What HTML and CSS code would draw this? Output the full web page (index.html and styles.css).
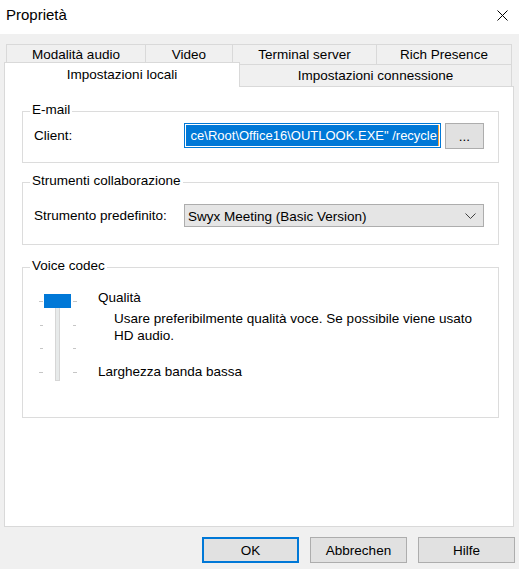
FILE: index.html
```html
<!DOCTYPE html>
<html lang="it">
<head>
<meta charset="utf-8">
<title>Proprietà</title>
<link rel="stylesheet" href="styles.css">
</head>
<body>
<div class="titlebar">
  <span class="title">Proprietà</span>
  <svg class="close" width="11" height="11" viewBox="0 0 11 11"><path d="M0.5 0.5L10.5 10.5M10.5 0.5L0.5 10.5" stroke="#000" stroke-width="1" fill="none"/></svg>
</div>
<div class="tabs1">
  <div class="tab t1">Modalità audio</div>
  <div class="tab t2">Video</div>
  <div class="tab t3">Terminal server</div>
  <div class="tab t4">Rich Presence</div>
</div>
<div class="tabs2">
  <div class="tab sel">Impostazioni locali</div>
  <div class="tab other">Impostazioni connessione</div>
</div>
<div class="panel">
  <div class="group email">
    <div class="legend">E-mail</div>
    <div class="row r-email">
      <span class="label">Client:</span>
      <div class="textbox"><div class="sel-text">ce\Root\Office16\OUTLOOK.EXE" /recycle</div></div>
      <div class="btn small">...</div>
    </div>
  </div>
  <div class="group tools">
    <div class="legend">Strumenti collaborazione</div>
    <div class="row r-tools">
      <span class="label">Strumento predefinito:</span>
      <div class="combo">
        <span>Swyx Meeting (Basic Version)</span>
        <svg width="11" height="6" viewBox="0 0 11 6"><path d="M0.5 0.5L5.5 5.5L10.5 0.5" stroke="#404040" stroke-width="1" fill="none"/></svg>
      </div>
    </div>
  </div>
  <div class="group codec">
    <div class="legend">Voice codec</div>
    <div class="row r-codec">
      <svg class="slider" width="40" height="90" viewBox="0 0 40 90">
        <g fill="#c6c6c6">
          <rect x="1" y="9" width="4" height="1"/>
          <rect x="2" y="33" width="3" height="1"/>
          <rect x="2" y="56" width="3" height="1"/>
          <rect x="1" y="80" width="4" height="1"/>
          <rect x="35" y="9" width="4" height="1"/>
          <rect x="35" y="33" width="3" height="1"/>
          <rect x="35" y="56" width="3" height="1"/>
          <rect x="35" y="80" width="4" height="1"/>
        </g>
        <rect x="17.5" y="15.5" width="4" height="73" fill="#e7eaea" stroke="#d6d6d6" stroke-width="1"/>
        <rect x="6" y="2" width="27" height="14" fill="#0078d7"/>
      </svg>
      <div class="codec-text">
        <div class="opt">Qualità</div>
        <div class="desc">Usare preferibilmente qualità voce. Se possibile viene usato<br>HD audio.</div>
        <div class="opt low">Larghezza banda bassa</div>
      </div>
    </div>
  </div>
</div>
<div class="buttons">
  <div class="btn default">OK</div>
  <div class="btn">Abbrechen</div>
  <div class="btn">Hilfe</div>
</div>
</body>
</html>
```
FILE: styles.css
```css
* { box-sizing: border-box; }
body {
  margin: 0;
  width: 519px;
  height: 569px;
  overflow: hidden;
  background: #f0f0f0;
  font-family: "Liberation Sans", Arial, sans-serif;
  font-size: 13.5px;
  color: #000;
}
.titlebar {
  height: 34px;
  background: #fff;
  display: flex;
  align-items: center;
  justify-content: space-between;
  padding: 0 11px 4px 6px;
}
.title { font-size: 15px; line-height: 20px; }
.close { display: block; }

.tabs1 {
  display: flex;
  margin: 10px 0 0 6px;
  height: 20px;
}
.tab {
  border: 1px solid #d9d9d9;
  border-bottom: 0;
  background: #f0f0f0;
  text-align: center;
  line-height: 20px;
  white-space: nowrap;
}
.tab + .tab { margin-left: -1px; }
.t1 { width: 140px; }
.t2 { width: 88px; }
.t3 { width: 145px; }
.t4 { width: 136px; }

.tabs2 {
  display: flex;
  margin-left: 4px;
  height: 22px;
  align-items: flex-start;
}
.tab.sel {
  width: 236px;
  height: 25px;
  margin-top: -2px;
  line-height: 23px;
  background: #fff;
  position: relative;
  z-index: 1;
}
.tab.other {
  width: 273px;
  height: 22px;
  line-height: 21px;
}

.panel {
  margin-left: 4px;
  width: 510px;
  height: 441px;
  border: 1px solid #d9d9d9;
  background: #fff;
  padding: 0 14px 0 17px;
  overflow: hidden;
}
.group {
  border: 1px solid #dcdcdc;
}
.legend {
  display: block;
  width: fit-content;
  margin: -10px 0 0 7px;
  padding: 0 2px;
  background: #fff;
  line-height: 16px;
}
.row { display: flex; align-items: center; }
.label { width: 150px; flex: none; }

.email { margin-top: 24px; padding-bottom: 14px; }
.r-email { margin-top: 5px; height: 25px; padding-left: 11px; }
.textbox {
  width: 257px;
  height: 25px;
  border: 1px solid #0078d7;
  padding: 1px;
  background: #fff;
  overflow: hidden;
}
.sel-text {
  height: 21px;
  background: #0078d7;
  color: #fff;
  font-size: 13px;
  display: flex;
  justify-content: flex-end;
  align-items: center;
  white-space: nowrap;
  overflow: hidden;
  border-right: 1px solid #f7a43a;
  padding-right: 1px;
}
.btn {
  width: 97px;
  height: 26px;
  background: #e1e1e1;
  border: 1px solid #adadad;
  display: flex;
  align-items: center;
  justify-content: center;
}
.btn.small {
  width: 39px;
  height: 26px;
  margin-left: 4px;
  padding-top: 2px;
}
.btn.default { border: 2px solid #0078d7; }

.tools { margin-top: 19px; padding-bottom: 17px; }
.r-tools { margin-top: 15px; height: 23px; padding-left: 11px; }
.combo {
  width: 300px;
  height: 23px;
  background: #e5e5e5;
  border: 1px solid #adadad;
  display: flex;
  align-items: center;
  justify-content: space-between;
  padding: 1px 7px 0 3px;
}
.combo svg { display: block; }

.codec { margin-top: 22px; padding-bottom: 35px; }
.r-codec { margin-top: 16px; align-items: flex-start; padding-left: 15px; }
.slider { display: block; margin-top: 2px; flex: none; }
.codec-text { margin-left: 20px; }
.opt { line-height: 16px; }
.desc { margin: 4px 0 0 16px; line-height: 17px; }
.opt.low { margin-top: 20px; }

.buttons {
  display: flex;
  justify-content: flex-end;
  gap: 11px;
  margin-top: 10px;
  padding-right: 4px;
}
```
